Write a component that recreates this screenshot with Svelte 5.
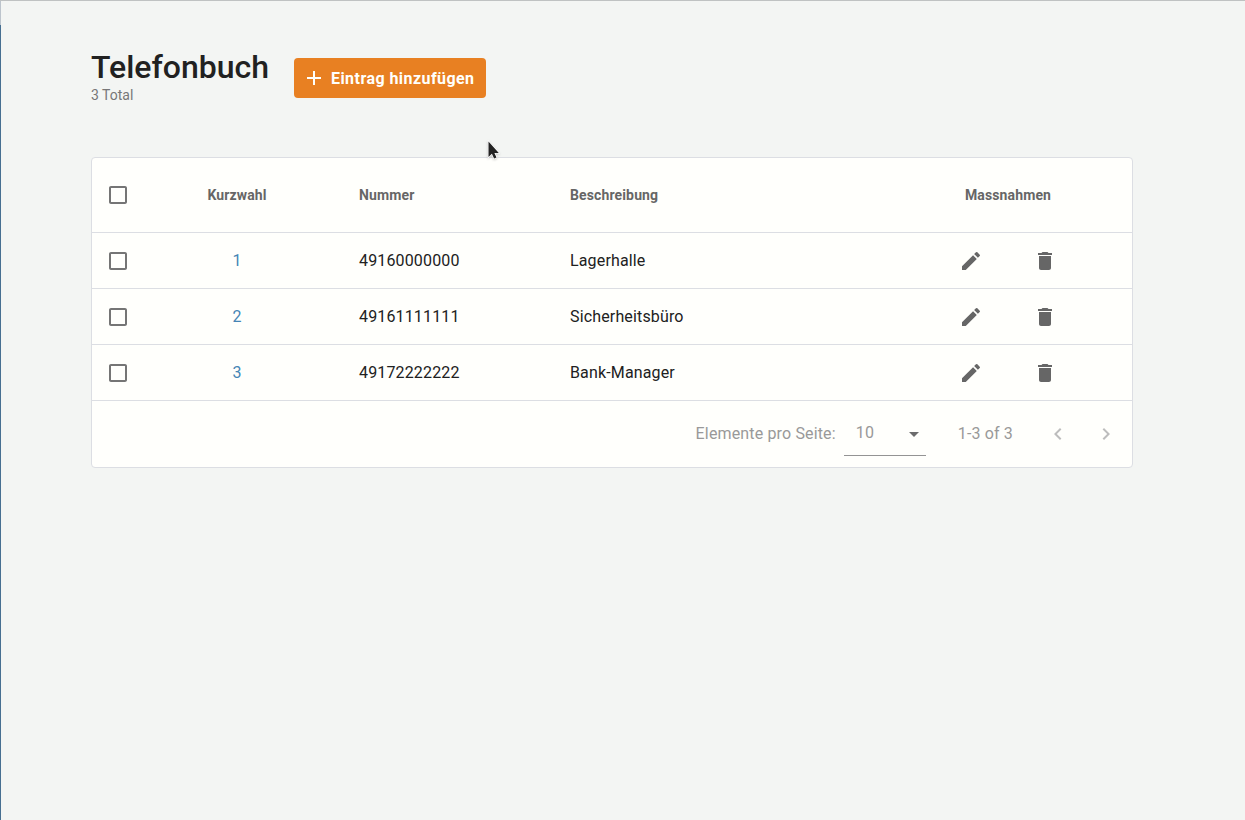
<script>
  const entries = [
    { id: 1, number: '49160000000', description: 'Lagerhalle' },
    { id: 2, number: '49161111111', description: 'Sicherheitsbüro' },
    { id: 3, number: '49172222222', description: 'Bank-Manager' }
  ];
  const icons = {
    box: 'M19 3H5c-1.11 0-2 .89-2 2v14c0 1.1.89 2 2 2h14c1.1 0 2-.9 2-2V5c0-1.11-.9-2-2-2zm0 2v14H5V5h14z',
    plus: 'M19 12.998h-6v6h-2v-6H5v-2h6v-6h2v6h6z',
    edit: 'M3 17.25V21h3.75L17.81 9.94l-3.75-3.75L3 17.25zM20.71 7.04a1 1 0 0 0 0-1.41l-2.34-2.34a1 1 0 0 0-1.41 0l-1.83 1.83 3.75 3.75 1.83-1.83z',
    trash: 'M6 19c0 1.1.9 2 2 2h8c1.1 0 2-.9 2-2V7H6v12zM19 4h-3.5l-1-1h-5l-1 1H5v2h14V4z',
    left: 'M15.41 7.41 14 6l-6 6 6 6 1.41-1.41L10.83 12z',
    right: 'M10 6 8.59 7.41 13.17 12l-4.58 4.59L10 18l6-6z',
    down: 'm7 10 5 5 5-5z'
  };
</script>

{#snippet icon(name)}
  <svg class="icon" viewBox="0 0 24 24" aria-hidden="true"><path d={icons[name]} /></svg>
{/snippet}

<div class="page">
  <header>
    <div class="heading">
      <h1>Telefonbuch</h1>
      <p>3 Total</p>
    </div>
    <button class="add">{@render icon('plus')}<span>Eintrag hinzufügen</span></button>
  </header>

  <section class="card">
    <div class="row head">
      <div class="check">{@render icon('box')}</div>
      <div class="short">Kurzwahl</div>
      <div class="number">Nummer</div>
      <div class="desc">Beschreibung</div>
      <div class="actions">Massnahmen</div>
    </div>
    {#each entries as e (e.id)}
      <div class="row">
        <div class="check">{@render icon('box')}</div>
        <div class="short link">{e.id}</div>
        <div class="number">{e.number}</div>
        <div class="desc">{e.description}</div>
        <div class="actions">{@render icon('edit')}{@render icon('trash')}</div>
      </div>
    {/each}
    <footer>
      <span class="per">Elemente pro Seite:</span>
      <div class="select"><span>10</span>{@render icon('down')}</div>
      <span class="range">1-3 of 3</span>
      <div class="nav">{@render icon('left')}{@render icon('right')}</div>
    </footer>
  </section>

  <svg class="cursor" viewBox="0 0 14 22" aria-hidden="true">
    <path d="M2.5 1.5v15.5l3.4-3.2 2.2 4.8 2.4-1.1-2.1-4.6h4.4z" />
  </svg>
</div>

<style>
  :global(body) { background: #f3f5f3; }
  .page {
    position: relative;
    box-sizing: border-box;
    height: 820px;
    padding: 49px 112px 0 91px;
    background:
      linear-gradient(#bfc2c2, #bfc2c2) 0 0 / 100% 1px no-repeat,
      linear-gradient(#bcc4cc 25px, #466f91 25px) 0 0 / 1px 100% no-repeat,
      #f3f5f3;
    font-family: Roboto, sans-serif;
    font-size: 16px;
    letter-spacing: 0.15px;
    color: #212121;
    overflow: hidden;
  }
  header { display: flex; height: 108px; }
  .heading { width: 203px; }
  h1 { margin: 0; font-size: 32px; line-height: 36px; font-weight: 500; letter-spacing: 0; }
  p { margin: 0; font-size: 14px; line-height: 20px; color: #777; letter-spacing: 0; }
  .add {
    display: flex;
    align-items: center;
    gap: 5px;
    width: 192px;
    height: 40px;
    margin-top: 9px;
    padding: 0 8px;
    border: 0;
    border-radius: 4px;
    background: #e88022;
    color: #fffffc;
    font: 700 16px/24px Roboto, sans-serif;
    letter-spacing: 0.44px;
    white-space: nowrap;
  }
  .add span { padding-top: 2px; }
  .icon { display: block; flex: none; width: 24px; height: 24px; fill: currentColor; }
  .card {
    border: 1px solid #dcdee3;
    border-radius: 4px;
    background: #fffffc;
  }
  .row {
    display: grid;
    grid-template-columns: 52px 186px 211px 343px 248px;
    align-items: center;
    box-sizing: border-box;
    height: 56px;
    border-bottom: 1px solid #dcdee3;
  }
  .head { height: 75px; font-size: 14px; font-weight: 700; letter-spacing: 0.13px; color: #666; }
  .check { padding: 1px 0 0 14px; color: #757575; }
  .head .check { padding-top: 0; }
  .short { text-align: center; }
  .link { color: #4585b5; }
  .number, .desc { padding-left: 29px; }
  .actions { display: flex; justify-content: center; gap: 50px; color: #666; padding-top: 1px; }
  .head .actions { padding-top: 0; }
  footer {
    display: flex;
    justify-content: flex-end;
    align-items: center;
    box-sizing: border-box;
    height: 66px;
    padding-right: 14px;
    color: #999;
  }
  .per, .range { padding-bottom: 2px; }
  .per { margin-right: 8px; }
  .select {
    display: flex;
    align-items: center;
    justify-content: space-between;
    align-self: flex-start;
    box-sizing: border-box;
    width: 82px;
    height: 46px;
    margin-top: 9px;
    padding-left: 12px;
    border-bottom: 1px solid #949494;
  }
  .select .icon { margin-top: 2px; color: #6c6c6c; }
  .range { margin: 0 33px 0 32px; }
  .nav { display: flex; gap: 24px; color: #bdbdbd; }
  .cursor { position: absolute; left: 486px; top: 140px; width: 14px; height: 22px; filter: drop-shadow(0 1px 1px #0003); }
  .cursor path { fill: #222; stroke: #fff; stroke-width: 1.4; paint-order: stroke; }
</style>
